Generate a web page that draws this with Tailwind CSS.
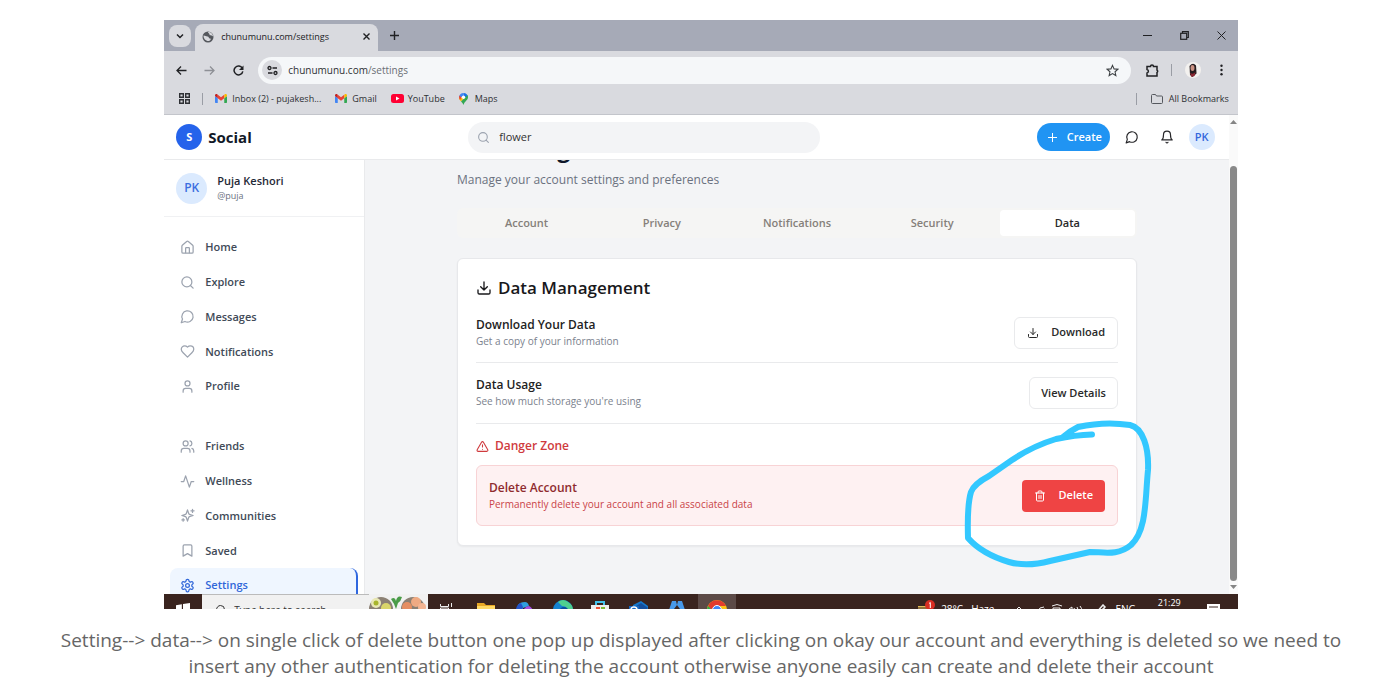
<!DOCTYPE html>
<html lang="en">
<head>
<meta charset="utf-8">
<title>Account deletion report</title>
<script src="https://cdn.jsdelivr.net/npm/@tailwindcss/browser@4"></script>
</head>
<body class="bg-white pt-5 pl-[25px] font-['Open_Sans','Noto_Sans',sans-serif]">
<svg class="hidden">
  <defs>
    <symbol id="gmail" viewBox="0 0 24 18"><path d="M0 2v14.500q0 1.500 1.500 1.500H5.500V8.500L0 4z" fill="#4285f4"/><path d="M24 2v14.500q0 1.500-1.500 1.500H18.500V8.500L24 4z" fill="#34a853"/><path d="M5.500 8.500V1.500L12 6.500l6.500-5v7L12 13.500z" fill="#ea4335"/><path d="M0 4V2.500C0 .2 2.500-.8 4.300.5l1.200 1v7z" fill="#c5221f"/><path d="M24 4V2.500C24 .2 21.500-.8 19.700.5l-1.200 1v7z" fill="#fbbc04"/></symbol>
    <symbol id="download" viewBox="0 0 24 24"><g fill="none" stroke="currentColor" stroke-width="2" stroke-linecap="round" stroke-linejoin="round"><path d="M21 15v4a2 2 0 0 1-2 2H5a2 2 0 0 1-2-2v-4"/><path d="m7 10 5 5 5-5M12 15V3"/></g></symbol>
    <symbol id="search" viewBox="0 0 24 24"><g fill="none" stroke="currentColor" stroke-width="2" stroke-linecap="round"><circle cx="11" cy="11" r="8"/><path d="m21 21-4.300-4.300"/></g></symbol>
    <symbol id="message" viewBox="0 0 24 24"><path d="M7.900 20A9 9 0 1 0 4 16.100L2 22Z" fill="none" stroke="currentColor" stroke-width="2" stroke-linejoin="round"/></symbol>
    <symbol id="gear" viewBox="0 0 24 24"><g fill="none" stroke="currentColor" stroke-width="2" stroke-linecap="round" stroke-linejoin="round"><path d="M12.220 2h-.44a2 2 0 0 0-2 2v.18a2 2 0 0 1-1 1.730l-.43.25a2 2 0 0 1-2 0l-.15-.08a2 2 0 0 0-2.730.73l-.22.38a2 2 0 0 0 .73 2.730l.15.1a2 2 0 0 1 1 1.720v.51a2 2 0 0 1-1 1.740l-.15.09a2 2 0 0 0-.73 2.730l.22.38a2 2 0 0 0 2.730.73l.15-.08a2 2 0 0 1 2 0l.43.25a2 2 0 0 1 1 1.730V20a2 2 0 0 0 2 2h.44a2 2 0 0 0 2-2v-.18a2 2 0 0 1 1-1.730l.43-.25a2 2 0 0 1 2 0l.15.08a2 2 0 0 0 2.730-.73l.22-.39a2 2 0 0 0-.73-2.730l-.15-.08a2 2 0 0 1-1-1.740v-.5a2 2 0 0 1 1-1.740l.15-.09a2 2 0 0 0 .73-2.730l-.22-.38a2 2 0 0 0-2.730-.73l-.15.08a2 2 0 0 1-2 0l-.43-.25a2 2 0 0 1-1-1.730V4a2 2 0 0 0-2-2z"/><circle cx="12" cy="12" r="3"/></g></symbol>
  </defs>
</svg>
<figure class="flex flex-col items-center">
<div class="w-[79.4%]">

  <!-- Browser tab strip -->
  <div class="flex h-[31px] items-center bg-[#a6aab7] pl-[5px] text-[#202124]">
    <button aria-label="Search tabs" class="flex size-[22px] items-center justify-center rounded-lg bg-[#d9dadf]"><svg class="size-2" viewBox="0 0 8 8" fill="none" stroke="currentColor" stroke-width="1.500"><path d="M1 2.500l3 3 3-3"/></svg></button>
    <div class="ml-1 flex h-full w-[183px] items-end">
      <div class="flex h-[27px] w-full items-center gap-[7px] rounded-t-lg bg-[#d9dadf] px-[7px] pb-[2px]">
        <svg class="size-3 shrink-0" viewBox="0 0 24 24"><circle cx="12" cy="12" r="11" fill="#55585e"/><path d="M3 9c4 0 5 2 8 2s2 4 5 4 1 5-3 5C7 20 3 15 3 9zM12 2c0 3 3 2 3 5s5 1 7 4c0-5-4-9-10-9z" fill="#d9dadf"/></svg>
        <span class="flex-1 text-[9px] leading-4 whitespace-nowrap">chunumunu.com/settings</span>
        <button aria-label="Close tab"><svg class="size-[9px]" viewBox="0 0 9 9" stroke="currentColor" stroke-width="1.400"><path d="M1.500 1.500l6 6m0-6l-6 6"/></svg></button>
      </div>
    </div>
    <button aria-label="New tab" class="ml-3"><svg class="size-[9px]" viewBox="0 0 9 9" stroke="currentColor" stroke-width="1.400"><path d="M0 4.500h9M4.500 0v9"/></svg></button>
    <div class="ml-auto flex items-center gap-7 pr-3">
      <button aria-label="Minimize"><svg class="size-[9px]" viewBox="0 0 9 9" stroke="currentColor"><path d="M0 4.500h9"/></svg></button>
      <button aria-label="Restore"><svg class="size-[9px]" viewBox="0 0 9 9" fill="none" stroke="currentColor" stroke-width="1.200"><rect x=".7" y="2.300" width="6" height="6"/><path d="M2.500 2V.7h5.800v5.800H7"/></svg></button>
      <button aria-label="Close"><svg class="size-[9px]" viewBox="0 0 9 9" stroke="currentColor"><path d="M.5.5l8 8m0-8l-8 8"/></svg></button>
    </div>
  </div>

  <!-- Address bar -->
  <div class="flex h-[38px] items-center bg-[#d9dadf] pl-3 pr-[10px] text-[#202124]">
    <button aria-label="Back"><svg class="size-[11px]" viewBox="0 0 11 11" fill="none" stroke="currentColor" stroke-width="1.300"><path d="M10.500 5.500H1M5 1.500l-4 4 4 4"/></svg></button>
    <button aria-label="Forward" class="ml-[17px] text-[#8e9096]"><svg class="size-[11px]" viewBox="0 0 11 11" fill="none" stroke="currentColor" stroke-width="1.300"><path d="M.5 5.500H10M6 1.500l4 4-4 4"/></svg></button>
    <button aria-label="Reload" class="ml-[18px]"><svg class="size-[11px]" viewBox="0 0 11 11"><path d="M9.300 3.300A4.400 4.400 0 1 0 9.800 6.300" fill="none" stroke="currentColor" stroke-width="1.500"/><path d="M10.500.5v4.500H6z" fill="currentColor"/></svg></button>
    <label class="ml-[14px] flex h-[27px] flex-1 items-center rounded-full bg-[#f5f7f9] pr-3 pl-1">
      <span class="flex size-5 items-center justify-center rounded-full bg-[#d9dadf]"><svg class="size-[11px]" viewBox="0 0 11 11" fill="none" stroke="currentColor" stroke-width="1.300"><circle cx="2.500" cy="3" r="1.500"/><path d="M5.500 3H10M1 8h4.500"/><circle cx="8.500" cy="8" r="1.500"/></svg></span>
      <span class="ml-[6px] flex-1 text-[10px] leading-4 text-[#2e3034]">chunumunu.com<span class="text-[#6b6e74]">/settings</span></span>
      <svg class="size-[13px]" viewBox="0 0 24 24" fill="none" stroke="#3c4043" stroke-width="2"><path d="M12 2.500l2.900 6.500 7.100.7-5.300 4.700 1.500 7L12 17.800 5.800 21.400l1.500-7L2 9.700 9.100 9z"/></svg>
    </label>
    <button aria-label="Extensions" class="ml-[15px]"><svg class="size-[13px]" viewBox="0 0 13 13" fill="none" stroke="currentColor" stroke-width="1.500"><path d="M1 2.500h3.500a1.500 1.500 0 0 1 3 0H11v3.500a1.500 1.500 0 0 1 0 2.500V12H1V9a1.800 1.800 0 0 0 0-3.500z"/></svg></button>
    <span class="ml-3 h-3 w-px bg-[#9a9da5]"></span>
    <button aria-label="Account" class="ml-[13px]"><svg class="size-4 rounded-full" viewBox="0 0 16 16"><rect width="16" height="16" fill="#f3f1ef"/><path d="M4.500 4Q8 0 11 3.500l.5 8L7.500 15 5 13z" fill="#241b1e"/><ellipse cx="7.500" cy="6" rx="2" ry="3" fill="#c99082"/><path d="M5 11q3 2 5.500-1l-1 4-3 1z" fill="#8b2531"/></svg></button>
    <button aria-label="Menu" class="ml-[14px]"><svg class="h-3 w-[13px]" viewBox="0 0 13 12" fill="currentColor"><circle cx="6.500" cy="1.800" r="1.200"/><circle cx="6.500" cy="6" r="1.200"/><circle cx="6.500" cy="10.200" r="1.200"/></svg></button>
  </div>

  <!-- Bookmarks -->
  <div class="flex h-[26px] items-center border-b border-[#c3c5cb] bg-[#d9dadf] pb-[6px] pl-[15px] pr-[9px] text-[9px] leading-4 whitespace-nowrap text-[#2e3034]">
    <svg class="size-[11px]" viewBox="0 0 11 11" fill="none" stroke="currentColor" stroke-width="1.400"><path d="M.7.7h3.600v3.600H.7zM6.700.7h3.600v3.600H6.700zM.7 6.700h3.600v3.600H.7zM6.700 6.700h3.600v3.600H6.700z"/></svg>
    <span class="ml-3 h-3 w-px bg-[#9a9da5]"></span>
    <a href="#" class="ml-3 flex items-center gap-[5px]"><svg class="h-[9px] w-3"><use href="#gmail"/></svg>Inbox (2) - pujakesh...</a>
    <a href="#" class="ml-[14px] flex items-center gap-[5px]"><svg class="h-[9px] w-3"><use href="#gmail"/></svg>Gmail</a>
    <a href="#" class="ml-[14px] flex items-center gap-1"><svg class="h-[9px] w-[13px]" viewBox="0 0 13 9"><rect width="13" height="9" rx="2.500" fill="#f03"/><path d="M5 2.500v4l3.500-2z" fill="#fff"/></svg>YouTube</a>
    <a href="#" class="ml-[14px] flex items-center gap-[7px]"><svg class="h-3 w-[9px]" viewBox="0 0 18 24"><path d="M9 0C4 0 0 4 0 9l9-2z" fill="#4285f4"/><path d="M9 0c5 0 9 4 9 9L9 8z" fill="#1a73e8"/><path d="M0 9c0 4 2 5 4 8l7-8z" fill="#fbbc04"/><path d="M18 8c0 7-7 8-9 16-1-3-3-5-5-7L17 4z" fill="#34a853"/><path d="M1 5l4 4-3 5Q-1 9 1 5z" fill="#ea4335"/><circle cx="9" cy="8.500" r="3.300" fill="#fff"/></svg>Maps</a>
    <span class="ml-auto h-3 w-px bg-[#9a9da5]"></span>
    <a href="#" class="ml-[14px] flex items-center gap-[6px]"><svg class="h-[10px] w-3" viewBox="0 0 12 10" fill="none" stroke="#55585e"><path d="M.5 1.500q0-1 1-1h3l1 1.500h5q1 0 1 1v5.500q0 1-1 1h-9q-1 0-1-1z"/></svg>All Bookmarks</a>
  </div>

  <!-- Web page viewport -->
  <div class="flex h-[479px] overflow-hidden bg-white">
    <div class="flex min-w-0 flex-1 flex-col">
      <header class="z-10 flex h-[45px] shrink-0 items-center justify-between border-b border-[#e9eaec] bg-white pr-[14px] pl-3">
        <a href="#" class="flex items-center gap-[6px]"><span class="flex size-[26px] items-center justify-center rounded-full bg-[#2563eb] text-[11px] font-bold text-white">S</span><span class="text-[15px] font-bold text-[#111827]">Social</span></a>
        <label class="flex h-[31px] w-[352px] items-center gap-[9px] rounded-full bg-[#f3f4f6] px-[9px] text-[#9ca3af]"><svg class="size-[13px] shrink-0"><use href="#search"/></svg><input type="text" aria-label="Search" value="flower" class="min-w-0 flex-1 text-[11px] text-[#333] outline-none"></label>
        <div class="flex items-center">
          <button class="flex h-7 w-[73px] items-center gap-[10px] rounded-full bg-[#2094f3] pl-[11px] text-[11px] font-semibold text-white"><svg class="size-[9px]" viewBox="0 0 9 9" stroke="currentColor"><path d="M0 4.500h9M4.500 0v9"/></svg>Create</button>
          <button aria-label="Messages" class="ml-[15px] text-[#27272a]"><svg class="size-[14px]"><use href="#message"/></svg></button>
          <button aria-label="Notifications" class="ml-[21px] text-[#27272a]"><svg class="size-[14px]" viewBox="0 0 24 24" fill="none" stroke="currentColor" stroke-width="2" stroke-linecap="round" stroke-linejoin="round"><path d="M6 8a6 6 0 0 1 12 0c0 7 3 9 3 9H3s3-2 3-9M10.300 21a1.940 1.940 0 0 0 3.400 0"/></svg></button>
          <button class="ml-[15px] flex size-[26px] items-center justify-center rounded-full bg-[#dbeafe] text-[11px] font-semibold text-[#3367dc]">PK</button>
        </div>
      </header>

      <div class="flex min-h-0 flex-1">
        <aside class="w-[201px] shrink-0 overflow-hidden border-r border-[#e9eaec]">
          <div class="flex h-[57px] items-center gap-[10px] border-b border-[#f0f1f3] pl-3">
            <span class="flex size-[31px] items-center justify-center rounded-full bg-[#dbeafe] text-xs font-semibold text-[#3d6ee0]">PK</span>
            <div><p class="text-[11px] leading-[15px] font-semibold text-[#1f2937]">Puja Keshori</p><p class="text-[9px] leading-[15px] text-[#6b7280]">@puja</p></div>
          </div>
          <nav class="px-[6px] pt-[13px] text-[11px] font-semibold text-[#414a57]">
            <ul class="grid h-[174px] grid-rows-5">
              <li><a href="#" class="flex h-full items-center gap-[10px] pl-[10px]"><svg class="size-[15px] text-[#9ca3af]" viewBox="0 0 24 24" fill="none" stroke="currentColor" stroke-width="2" stroke-linejoin="round"><path d="M15 21v-8a1 1 0 0 0-1-1h-4a1 1 0 0 0-1 1v8"/><path d="M3 10a2 2 0 0 1 .7-1.500l7-6a2 2 0 0 1 2.600 0l7 6A2 2 0 0 1 21 10v9a2 2 0 0 1-2 2H5a2 2 0 0 1-2-2z"/></svg>Home</a></li>
              <li><a href="#" class="flex h-full items-center gap-[10px] pl-[10px]"><svg class="size-[15px] text-[#9ca3af]"><use href="#search"/></svg>Explore</a></li>
              <li><a href="#" class="flex h-full items-center gap-[10px] pl-[10px]"><svg class="size-[15px] text-[#9ca3af]"><use href="#message"/></svg>Messages</a></li>
              <li><a href="#" class="flex h-full items-center gap-[10px] pl-[10px]"><svg class="size-[15px] text-[#9ca3af]" viewBox="0 0 24 24" fill="none" stroke="currentColor" stroke-width="2" stroke-linejoin="round"><path d="M19 14c1.500-1.500 3-3.200 3-5.500A5.500 5.500 0 0 0 16.500 3c-1.800 0-3 .5-4.500 2-1.500-1.500-2.700-2-4.500-2A5.500 5.500 0 0 0 2 8.500c0 2.300 1.500 4 3 5.500l7 7Z"/></svg>Notifications</a></li>
              <li><a href="#" class="flex h-full items-center gap-[10px] pl-[10px]"><svg class="size-[15px] text-[#9ca3af]" viewBox="0 0 24 24" fill="none" stroke="currentColor" stroke-width="2" stroke-linecap="round"><path d="M19 21v-2a4 4 0 0 0-4-4H9a4 4 0 0 0-4 4v2"/><circle cx="12" cy="7" r="4"/></svg>Profile</a></li>
            </ul>
            <ul class="mt-[25px] grid h-[174px] grid-rows-5">
              <li><a href="#" class="flex h-full items-center gap-[10px] pl-[10px]"><svg class="size-[15px] text-[#9ca3af]" viewBox="0 0 24 24" fill="none" stroke="currentColor" stroke-width="2" stroke-linecap="round"><path d="M16 21v-2a4 4 0 0 0-4-4H6a4 4 0 0 0-4 4v2M22 21v-2a4 4 0 0 0-3-3.870M16 3.130a4 4 0 0 1 0 7.750"/><circle cx="9" cy="7" r="4"/></svg>Friends</a></li>
              <li><a href="#" class="flex h-full items-center gap-[10px] pl-[10px]"><svg class="size-[15px] text-[#9ca3af]" viewBox="0 0 24 24" fill="none" stroke="currentColor" stroke-width="2" stroke-linecap="round" stroke-linejoin="round"><path d="M22 12h-4l-3 9L9 3l-3 9H2"/></svg>Wellness</a></li>
              <li><a href="#" class="flex h-full items-center gap-[10px] pl-[10px]"><svg class="size-[15px] text-[#9ca3af]" viewBox="0 0 24 24" fill="none" stroke="currentColor" stroke-width="2" stroke-linecap="round" stroke-linejoin="round"><path d="m12 3-1.900 5.800a2 2 0 0 1-1.300 1.300L3 12l5.800 1.900a2 2 0 0 1 1.300 1.300L12 21l1.900-5.800a2 2 0 0 1 1.300-1.300L21 12l-5.800-1.900a2 2 0 0 1-1.300-1.300ZM5 17v4M3 19h4M20 2v5M17.500 4.500h5"/></svg>Communities</a></li>
              <li><a href="#" class="flex h-full items-center gap-[10px] pl-[10px]"><svg class="size-[15px] text-[#9ca3af]" viewBox="0 0 24 24" fill="none" stroke="currentColor" stroke-width="2" stroke-linejoin="round"><path d="m19 21-7-4-7 4V5a2 2 0 0 1 2-2h10a2 2 0 0 1 2 2v16z"/></svg>Saved</a></li>
              <li><a href="#" aria-current="page" class="flex h-full items-center gap-[10px] rounded-lg border-r-2 border-[#2f67df] bg-[#eff6ff] pl-[10px] text-[#3167d9]"><svg class="size-[15px]"><use href="#gear"/></svg>Settings</a></li>
            </ul>
          </nav>
        </aside>

        <main class="min-w-0 flex-1 overflow-hidden bg-[#f3f4f6]">
          <div class="mx-auto -mt-[30px] w-[680px] max-w-full">
            <h1 class="flex h-9 items-center gap-3 text-[23px] leading-9 font-bold text-[#0f172a]"><svg class="size-5"><use href="#gear"/></svg>Settings</h1>
            <p class="mt-1 text-xs leading-5 text-[#6b7280]">Manage your account settings and preferences</p>
            <div role="tablist" class="mt-[18px] grid h-[30px] grid-cols-5 rounded-md bg-[#f5f5f4] p-[2px] text-[11px] font-semibold text-[#85807a]">
              <button role="tab">Account</button>
              <button role="tab">Privacy</button>
              <button role="tab">Notifications</button>
              <button role="tab">Security</button>
              <button role="tab" aria-selected="true" class="rounded-sm bg-white text-[#292929]">Data</button>
            </div>
            <section class="mt-5 rounded-md border border-[#e7e8eb] bg-white px-[18px] pt-[19px] pb-[19px] shadow-xs">
              <h2 class="flex h-5 items-center gap-[6px] text-[17px] font-semibold text-[#18181b]"><svg class="size-4"><use href="#download"/></svg>Data Management</h2>
              <div class="flex h-[65px] items-center justify-between border-b border-[#e9eaec] pt-[5px]">
                <div><h3 class="text-xs leading-[17px] font-semibold text-[#222]">Download Your Data</h3><p class="text-[10px] leading-[17px] text-[#7b828e]">Get a copy of your information</p></div>
                <button class="flex h-8 items-center gap-3 rounded-md border border-[#e9eaec] px-3 text-[11px] font-semibold text-[#292929]"><svg class="size-3"><use href="#download"/></svg>Download</button>
              </div>
              <div class="flex h-[61px] items-center justify-between border-b border-[#e9eaec]">
                <div><h3 class="text-xs leading-[17px] font-semibold text-[#222]">Data Usage</h3><p class="text-[10px] leading-[17px] text-[#7b828e]">See how much storage you're using</p></div>
                <button class="flex h-8 items-center rounded-md border border-[#e9eaec] px-[11px] text-[11px] font-semibold text-[#292929]">View Details</button>
              </div>
              <h3 class="mt-3 flex h-5 items-center gap-[6px] text-xs font-semibold text-[#cf3a3d]"><svg class="size-[13px]" viewBox="0 0 24 24" fill="none" stroke="currentColor" stroke-width="2" stroke-linecap="round" stroke-linejoin="round"><path d="m21.700 18-8-14a2 2 0 0 0-3.500 0l-8 14A2 2 0 0 0 4 21h16a2 2 0 0 0 1.700-3M12 9v4M12 17h.01"/></svg>Danger Zone</h3>
              <div class="relative mt-[9px] flex h-[61px] items-center justify-between rounded-md border border-[#f8d3d5] bg-[#fef1f2] px-3">
                <div><h4 class="text-xs leading-[17px] font-semibold text-[#8f2b2e]">Delete Account</h4><p class="text-[10px] leading-[17px] text-[#c94348]">Permanently delete your account and all associated data</p></div>
                <button class="flex h-8 items-center gap-3 rounded-sm bg-[#ef4444] px-3 text-[11px] font-semibold text-white"><svg class="size-3" viewBox="0 0 24 24" fill="none" stroke="currentColor" stroke-width="2" stroke-linecap="round" stroke-linejoin="round"><path d="M3 6h18M19 6v14a2 2 0 0 1-2 2H7a2 2 0 0 1-2-2V6M8 6V4a2 2 0 0 1 2-2h4a2 2 0 0 1 2 2v2M10 11v6M14 11v6"/></svg>Delete</button>
                <!-- Hand-drawn marker ring -->
                <svg class="pointer-events-none absolute -top-[51px] -right-[38px] h-[155px] w-[195px]" viewBox="960 415 195 155" fill="none" stroke="#33c8ff" stroke-width="6" stroke-linecap="round" stroke-linejoin="round"><path d="M1092 434.500Q1075 435 1056 439Q1033 446 1012 460L989 476Q974 484 971 492Q967 505 968 538Q982 554 1009 562Q1027 567 1050 561L1090 552C1104 552 1118 556 1131 545C1147 530 1145 500 1148 470C1149 448 1143 428 1130 425Q1105 421 1078 427Q1070 431 1063 437"/></svg>
              </div>
            </section>
          </div>
        </main>
      </div>
    </div>
    <!-- Scrollbar -->
    <div class="flex w-[9px] shrink-0 flex-col items-center justify-between bg-[#fafafa] py-[5px]" aria-hidden="true">
      <svg class="h-1 w-[7px]" viewBox="0 0 7 4" fill="#858585"><path d="M0 4l3.500-4L7 4z"/></svg>
      <div class="mt-[42px] mb-1 w-[7px] flex-1 rounded-full bg-[#898989]"></div>
      <svg class="h-1 w-[7px]" viewBox="0 0 7 4" fill="#858585"><path d="M0 0l3.500 4L7 0z"/></svg>
    </div>
  </div>

  <!-- Taskbar, cut off by the capture's lower edge -->
  <div class="h-[15px] overflow-hidden bg-[#3a241f] text-white">
    <div class="flex h-[31px] items-center text-[10px] whitespace-nowrap">
      <button aria-label="Start" class="flex w-[38px] shrink-0 justify-center"><svg class="size-[14px]" viewBox="0 0 12 12" fill="#fff"><path d="M0 2l5-1v5H0zM6 .8L12 0v6H6zM0 7h5v4.500l-5-.8zM6 7h6v5l-6-.8z"/></svg></button>
      <label class="flex h-full w-[167px] shrink-0 items-center gap-2 border-t border-[#bbb] bg-[#f1f1f1] pl-3 text-[#333]"><svg class="size-3 shrink-0 -scale-x-100"><use href="#search"/></svg><input type="text" aria-label="Taskbar search" value="Type here to search" class="w-[120px] text-[10px] outline-none"></label>
      <span class="flex h-full w-[59px] shrink-0 items-start bg-[#f1f1f1]"><svg class="h-[29px] w-[59px]" viewBox="2 0 59 29"><circle cx="14" cy="15" r="12" fill="#8b8074"/><circle cx="46" cy="15" r="12" fill="#8b8074"/><circle cx="9" cy="9" r="5" fill="#e9e8b5"/><circle cx="9" cy="9" r="2.500" fill="#a8b52c"/><circle cx="19" cy="14" r="5" fill="#d9d56a"/><circle cx="49" cy="8" r="5" fill="#efaa83"/><circle cx="40" cy="13" r="5" fill="#e58e62"/><circle cx="55" cy="13" r="4" fill="#f3b593"/><path d="M29 15q-2-6-5-10 4-3 5 2 1-6 6-4-1 4-4 6z" fill="#4a9c48"/></svg></span>
      <svg class="ml-3 size-[13px] shrink-0" viewBox="0 0 13 13" fill="none" stroke="#eee"><path d="M.5 1v2.500h8V1M.5 5h8v5h-8zM11.500 0v4M11.500 6v6"/></svg>
      <svg class="ml-6 size-[18px] shrink-0" viewBox="0 0 18 18"><path d="M0 2h7l2 2h9v12H0z" fill="#e9a825"/><path d="M0 5h18v12H0z" fill="#ffd864"/></svg>
      <svg class="ml-5 size-[18px] shrink-0" viewBox="0 0 18 18"><path d="M3 4Q5 1 10 1q3 0 4 4l-6 2-2 8H2z" fill="#2e9fe0"/><path d="M1 8q1-5 5-6l2 4-2 9z" fill="#2353c9"/><path d="M9 8q2-3 5-3 5 2 4 10H9z" fill="#a350df"/></svg>
      <svg class="ml-5 size-5 shrink-0" viewBox="0 0 20 20"><circle cx="10" cy="10" r="10" fill="#1583d0"/><path d="M5 2Q10-2 15 2q5 3 5 8h-6q0-4-5-4z" fill="#4fd08f"/><circle cx="11" cy="12" r="5" fill="#0b4f9e"/></svg>
      <svg class="ml-[18px] size-[18px] shrink-0" viewBox="0 0 18 18"><path d="M5 5V1h8v4" fill="none" stroke="#43c2ea" stroke-width="2"/><path d="M0 4h18v13H0z" fill="#eee"/><path d="M5 6h4v4H5z" fill="#ef5034"/><path d="M10 6h4v4h-4z" fill="#7bb933"/></svg>
      <svg class="ml-5 size-[19px] shrink-0" viewBox="0 0 19 19"><path d="M4 5l8-4 7 5v10H4z" fill="#1679cd"/><path d="M4 8l8-5 7 5-7 5z" fill="#154f9c"/><rect y="6" width="10" height="10" fill="#1467c2"/><circle cx="5" cy="10" r="3" fill="none" stroke="#fff" stroke-width="1.500"/></svg>
      <svg class="ml-5 size-[18px] shrink-0" viewBox="0 0 18 18"><path d="M8 0H4L0 12l5 3 1-7 3-4zM10 0h4l4 12-5 3-1-7-3-4z" fill="#4799eb"/></svg>
      <span class="ml-3 flex h-full w-[38px] shrink-0 items-center justify-center bg-[#5c4a47]"><svg class="size-5" viewBox="0 0 20 20"><circle cx="10" cy="10" r="10" fill="#fbc116"/><path d="M1 6A10 10 0 0 1 19 6L10 6 6 12z" fill="#e33b2e"/><path d="M1 6a10 10 0 0 0 8 14l3-7-6-2z" fill="#2da94f"/><circle cx="10" cy="10" r="4.500" fill="#4285f4" stroke="#fff"/></svg></span>
      <div class="ml-auto flex items-center">
        <svg class="h-[22px] w-[17px]" viewBox="0 0 17 22"><path d="M0 7h14v10H0z" fill="#e4bb59"/><path d="M0 9h14" stroke="#3a241f"/><circle cx="12" cy="6" r="5" fill="#d82d22"/><path d="M11 4.500l1.300-1V9" fill="none" stroke="#fff"/></svg>
        <span class="ml-[6px]">28°C</span><span class="ml-2">Haze</span>
        <svg class="ml-[22px] h-3 w-[75px]" viewBox="0 0 75 12" fill="none" stroke="#eee"><path d="M0 6l3-3 3 3M22 7q1-4 6-4M24 9q1-4 5-4M36 2q5-3 10 0M37 4h7v5h-7zM53 5l3-2v7l-3-2zM58 4q2 2 0 5M61 3q3 4 0 7M64 2q4 5 0 9"/></svg>
        <svg class="ml-1 size-3" viewBox="0 0 12 12" fill="none" stroke="#eee" stroke-width="1.500"><path d="M1 9L8 1l2 2-7 7M6 8l4-3"/></svg>
        <span class="ml-2">ENG</span>
        <div class="ml-[22px] text-[9px] leading-[15px]"><p>21:29</p><p>&nbsp;</p></div>
        <svg class="mr-[18px] ml-[26px] h-3 w-[13px]" viewBox="0 0 13 12"><path d="M0 0h13v10H8l-2 2-2-2H0z" fill="#fff"/><path d="M2 3h9M2 6h9" stroke="#3a241f"/></svg>
      </div>
    </div>
  </div>
</div>
<figcaption class="mt-[18px] px-8 text-center text-[19px] leading-[26px] text-[#666]">Setting--&gt; data--&gt; on single click of delete button one pop up displayed after clicking on okay our account and everything is deleted so we need to insert any other authentication for deleting the account otherwise anyone easily can create and delete their account</figcaption>
</figure>
</body>
</html>
